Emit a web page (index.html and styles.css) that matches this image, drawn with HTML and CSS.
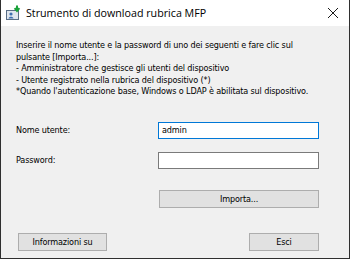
FILE: index.html
```html
<!DOCTYPE html>
<html lang="it">
<head>
    <meta charset="UTF-8">
    <title>Strumento di download rubrica MFP</title>
    <link rel="stylesheet" href="styles.css">
</head>
<body>
    <div class="window">
        <div class="titlebar">
            <svg class="app-icon" width="16" height="16" viewBox="0 0 16 16">
                <rect x="1.5" y="5.5" width="12" height="9" fill="#dfe6ee" stroke="#5a6e86"/>
                <circle cx="6" cy="9" r="1.6" fill="#3f6fb0"/>
                <path d="M3.5 13.5 C3.8 11.2 8.2 11.2 8.5 13.5 Z" fill="#3f6fb0"/>
                <path d="M12 0.5 V5 M9.6 3.2 L12 6 L14.4 3.2" fill="none" stroke="#1aa23a" stroke-width="2"/>
            </svg>
            <span class="title">Strumento di download rubrica MFP</span>
            <svg class="close" width="12" height="12" viewBox="0 0 12 12">
                <path d="M1 1 L11 11 M11 1 L1 11" stroke="#1a1a1a" stroke-width="1"/>
            </svg>
        </div>

        <div class="content">
            <p class="intro">
                Inserire il nome utente e la password di uno dei seguenti e fare clic sul<br>
                pulsante [Importa...]:<br>
                - Amministratore che gestisce gli utenti del dispositivo<br>
                - Utente registrato nella rubrica del dispositivo (*)<br>
                *Quando l'autenticazione base, Windows o LDAP è abilitata sul dispositivo.
            </p>

            <div class="form-row">
                <label class="label">Nome utente:</label>
                <div class="field focused">admin</div>
            </div>
            <div class="form-row">
                <label class="label">Password:</label>
                <div class="field"></div>
            </div>
            <div class="import-row">
                <button class="btn btn-import">Importa...</button>
            </div>

            <div class="footer">
                <button class="btn btn-info">Informazioni su</button>
                <button class="btn btn-exit">Esci</button>
            </div>
        </div>
    </div>
</body>
</html>
```

FILE: styles.css
```css
body {
    margin: 0;
    background-color: #ffffff;
    font-family: "DejaVu Sans Condensed", "DejaVu Sans", sans-serif;
    font-size: 9px;
    letter-spacing: -0.14px;
    color: #000000;
}

.window {
    width: 350px;
    height: 259px;
    box-sizing: border-box;
    border: 1px solid #2f2f2f;
    border-top: none;
    background-color: #f0f0f0;
    display: flex;
    flex-direction: column;
}

.titlebar {
    height: 26px;
    background-color: #ffffff;
    display: flex;
    align-items: center;
    padding: 0 10px 0 4px;
}

.app-icon {
    margin-right: 5px;
}

.title {
    font-family: "Open Sans", "Noto Sans", sans-serif;
    font-size: 10.7px;
    letter-spacing: 0;
    flex: 1;
}

.content {
    flex: 1;
    padding: 14px 30px 0 15px;
    display: flex;
    flex-direction: column;
}

.intro {
    margin: 0 0 24px 0;
    line-height: 11.5px;
}

.form-row {
    display: flex;
    align-items: center;
    margin-bottom: 13px;
}

.label {
    width: 142px;
}

.field {
    flex: 1;
    height: 17px;
    box-sizing: border-box;
    border: 1px solid #7a7a7a;
    background-color: #ffffff;
    padding: 0 3px;
    line-height: 15px;
}

.field.focused {
    border-color: #0078d7;
}

.import-row {
    display: flex;
    justify-content: flex-end;
    margin-top: 8px;
}

.btn {
    height: 18px;
    box-sizing: border-box;
    border: 1px solid #adadad;
    background-color: #e1e1e1;
    font-family: inherit;
    font-size: 9px;
    letter-spacing: -0.14px;
    color: #000000;
    padding: 0;
}

.btn-import {
    width: 160px;
}

.footer {
    display: flex;
    justify-content: space-between;
    margin-top: 25px;
    padding-left: 2px;
}

.btn-info {
    width: 89px;
}

.btn-exit {
    width: 70px;
}
```
